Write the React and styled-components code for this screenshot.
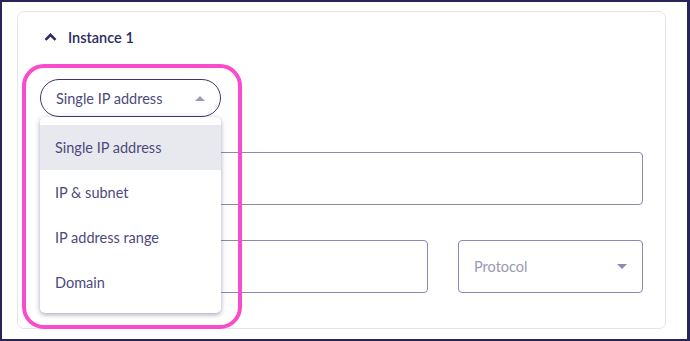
import React from 'react'
import styled, { createGlobalStyle } from 'styled-components'

const Global = createGlobalStyle`
  html, body { margin: 0; padding: 0; background: #fff; }
  body { font-family: Lato, "Open Sans", sans-serif; }
  * { box-sizing: border-box; }
`

const Frame = styled.div`
  width: 690px;
  height: 341px;
  border: 2px solid #27245a;
  border-right-width: 3px;
  padding: 9px 21px 10px 15px;
  background: #fff;
`

const Card = styled.div`
  position: relative;
  height: 100%;
  border: 1px solid #e4e4ea;
  border-radius: 7px;
  padding: 15px 22px 0 22px;
`

const Header = styled.div`
  display: flex;
  align-items: center;
  gap: 11px;
  height: 20px;
  padding-left: 4px;
  color: #2d2b63;
  font-size: 14.5px;
  font-weight: 600;
`

const Body = styled.div`
  display: flex;
  flex-direction: column;
  margin-top: 32px;
`

const SelectWrap = styled.div`
  position: relative;
  width: 181px;
  z-index: 3;
`

const Pill = styled.div`
  display: flex;
  align-items: center;
  justify-content: space-between;
  height: 38px;
  padding: 0 15px 0 15px;
  border: 1px solid #3a3870;
  border-radius: 19px;
  color: #4c4a7c;
  font-size: 14.5px;
`

const Menu = styled.ul`
  position: absolute;
  top: 38px;
  left: 0;
  width: 181px;
  margin: 0;
  padding: 8px 0 8px;
  list-style: none;
  background: #fff;
  border-radius: 5px;
  box-shadow: 0 2px 4px rgba(60, 58, 110, 0.35), 0 0 6px rgba(60, 58, 110, 0.12);
`

const Item = styled.li`
  height: 45px;
  display: flex;
  align-items: center;
  padding-left: 15px;
  color: #4c4a7c;
  font-size: 14.5px;
  background: ${p => (p.$active ? '#e8e8ef' : '#fff')};
`

const Field = styled.div`
  display: flex;
  align-items: center;
  justify-content: space-between;
  height: 53px;
  width: ${p => p.$w || '100%'};
  padding: 0 15px;
  border: 1px solid #8c89b0;
  border-radius: 4px;
  color: #9b99b5;
  font-size: 14.5px;
`

const Row = styled.div`
  display: flex;
  gap: 30px;
  margin-top: ${p => p.$mt || 0}px;
`

const Highlight = styled.div`
  position: absolute;
  left: 4px;
  top: 52px;
  width: 220px;
  height: 265px;
  border: 4.5px solid #f94bcc;
  border-radius: 22px;
  pointer-events: none;
  z-index: 4;
`

const Caret = ({ up, color }) => (
  <svg width="10" height="5" viewBox="0 0 10 5">
    <path d={up ? 'M0 5 L5 0 L10 5 Z' : 'M0 0 L10 0 L5 5 Z'} fill={color} />
  </svg>
)

const Chevron = () => (
  <svg width="13" height="8" viewBox="0 0 13 8">
    <path d="M1.5 6.8 L6.5 1.8 L11.5 6.8" fill="none" stroke="#2d2b63" strokeWidth="2.6" />
  </svg>
)

const options = ['Single IP address', 'IP & subnet', 'IP address range', 'Domain']

export default function App() {
  return (
    <Frame>
      <Global />
      <Card>
        <Header>
          <Chevron />
          <span>Instance 1</span>
        </Header>
        <Body>
          <SelectWrap>
            <Pill>
              <span>Single IP address</span>
              <Caret up color="#9d9bb8" />
            </Pill>
            <Menu>
              {options.map((o, i) => (
                <Item key={o} $active={i === 0}>{o}</Item>
              ))}
            </Menu>
          </SelectWrap>
          <Row $mt={35}>
            <Field />
          </Row>
          <Row $mt={35}>
            <Field $w="388px" />
            <Field $w="185px">
              <span>Protocol</span>
              <Caret color="#8e8bae" />
            </Field>
          </Row>
        </Body>
        <Highlight />
      </Card>
    </Frame>
  )
}
